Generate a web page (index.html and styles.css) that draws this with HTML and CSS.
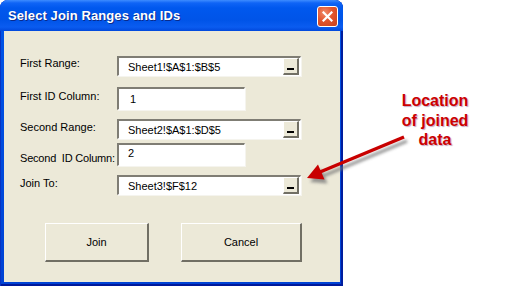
FILE: index.html
```html
<!DOCTYPE html>
<html lang="en">
<head>
    <meta charset="UTF-8">
    <title>Select Join Ranges and IDs</title>
    <link rel="stylesheet" href="styles.css">
</head>
<body>
    <div class="page">
        <div class="window">
            <div class="titlebar">
                <span class="title">Select Join Ranges and IDs</span>
                <span class="close">
                    <svg width="11" height="11" viewBox="0 0 11 11"><path d="M1.5 1.5 L9.5 9.5 M9.5 1.5 L1.5 9.5" stroke="#fff" stroke-width="2.2" stroke-linecap="square"/></svg>
                </span>
            </div>
            <div class="content">
                <div class="row r1">
                    <label class="label">First Range:</label>
                    <div class="field ref"><span>Sheet1!$A$1:$B$5</span><i class="pick"><b></b></i></div>
                </div>
                <div class="row r2">
                    <label class="label">First ID Column:</label>
                    <div class="field idbox"><span>1</span></div>
                </div>
                <div class="row r3">
                    <label class="label">Second Range:</label>
                    <div class="field ref"><span>Sheet2!$A$1:$D$5</span><i class="pick"><b></b></i></div>
                </div>
                <div class="row r4">
                    <label class="label tight">Second&nbsp; ID Column:</label>
                    <div class="field idbox top"><span>2</span></div>
                </div>
                <div class="row r5">
                    <label class="label">Join To:</label>
                    <div class="field ref"><span>Sheet3!$F$12</span><i class="pick"><b></b></i></div>
                </div>
                <div class="buttons">
                    <button class="btn join">Join</button>
                    <button class="btn cancel">Cancel</button>
                </div>
            </div>
        </div>
        <div class="note">Location<br>of joined<br>data</div>
    </div>

    <svg class="arrow" width="507" height="288" viewBox="0 0 507 288">
        <defs>
            <filter id="blur" x="-20%" y="-50%" width="140%" height="200%">
                <feGaussianBlur stdDeviation="1.6"/>
            </filter>
        </defs>
        <g transform="translate(3,4)" filter="url(#blur)" fill="#777" stroke="#777" opacity="0.75">
            <line x1="404" y1="137" x2="320" y2="172" stroke-width="3.5"/>
            <polygon points="307,178 318,164.5 324.5,179.5" stroke="none"/>
        </g>
        <line x1="404" y1="137" x2="320" y2="172" stroke="#c80000" stroke-width="3.5"/>
        <polygon points="307,178 318,164.5 324.5,179.5" fill="#c80000"/>
    </svg>
</body>
</html>
```

FILE: styles.css
```css
*{
    margin: 0px;
    padding: 0px;
    box-sizing: border-box;
}
body{
    background: #fff;
    font-family: "Liberation Sans", Arial, sans-serif;
    font-size: 11px;
    color: #000;
}
.page{
    display: flex;
    width: 507px;
    height: 288px;
}
.window{
    width: 343px;
    height: 286px;
    display: flex;
    flex-direction: column;
    border-radius: 8px 8px 0 0;
    background: linear-gradient(180deg, #0a5ef0 0px, #0053e6 31px, #0042d4 100%);
    box-shadow: inset 1px 0 0 #0833c2, inset -2px 0 0 #001d9e, inset 0 -2px 0 #00189a;
}
.titlebar{
    height: 31px;
    display: flex;
    align-items: center;
    justify-content: space-between;
    padding: 0 5px 1px 8px;
    border-radius: 8px 8px 0 0;
    background: linear-gradient(180deg, #3d8cff 0px, #0f64f6 3px, #0058ee 8px, #0054e8 20px, #0a5cf0 27px, #0048dc 31px);
}
.title{
    color: #fff;
    font-weight: bold;
    font-size: 13px;
    letter-spacing: 0.1px;
    text-shadow: 1px 1px 0 #0a2a8a;
}
.close{
    width: 21px;
    height: 21px;
    margin-top: 2px;
    display: flex;
    align-items: center;
    justify-content: center;
    border: 1px solid #fff;
    border-radius: 3px;
    background: radial-gradient(circle at 35% 30%, #f08b6b 0%, #e2552e 45%, #c8401c 100%);
}
.content{
    flex: 1;
    margin: 0 3px 4px 4px;
    background: #ece9d8;
    padding: 25px 0 0 16px;
}
.row{
    display: flex;
}
.label{
    width: 97px;
    flex: none;
    line-height: 13px;
    white-space: nowrap;
}
.label.tight{
    letter-spacing: -0.2px;
}
.r1 .label{ padding-top: 1px; }
.r2{ margin-top: 11px; }
.r2 .label{ padding-top: 3px; }
.r3{ margin-top: 9px; }
.r3 .label{ padding-top: 2px; }
.r4{ margin-top: 4px; }
.r4 .label{ padding-top: 9px; }
.r5{ margin-top: 9px; }
.r5 .label{ padding-top: 2px; }

.field{
    background: #fff;
    border-top: 2px solid #7f7d74;
    border-left: 2px solid #7f7d74;
    border-bottom: 1px solid #fff;
    border-right: 1px solid #fff;
    box-shadow: 1px 1px 0 #f5f4ee;
    display: flex;
    align-items: center;
    padding-left: 9px;
}
.ref{
    width: 184px;
    height: 20px;
}
.ref span{
    flex: 1;
}
.idbox{
    width: 128px;
    height: 23px;
    padding-left: 11px;
}
.idbox.top{
    align-items: flex-start;
    padding-left: 9px;
    padding-top: 2px;
}
.pick{
    width: 16px;
    height: 17px;
    margin-right: 1px;
    background: #ece9d8;
    border-top: 1px solid #fff;
    border-left: 1px solid #fff;
    border-right: 2px solid #716f64;
    border-bottom: 2px solid #716f64;
    display: flex;
    justify-content: center;
    align-items: flex-end;
    padding-bottom: 3px;
}
.pick b{
    width: 7px;
    height: 2px;
    background: #000;
}
.buttons{
    display: flex;
    gap: 32px;
    margin-top: 28px;
    padding-left: 25px;
}
.btn{
    height: 39px;
    background: #ece9d8;
    font-family: "Liberation Sans", Arial, sans-serif;
    font-size: 11px;
    color: #000;
    border-top: 1px solid #fff;
    border-left: 1px solid #fff;
    border-right: 2px solid #716f64;
    border-bottom: 2px solid #716f64;
}
.join{ width: 104px; }
.cancel{ width: 121px; }

.note{
    width: 164px;
    padding-top: 91px;
    padding-left: 20px;
    text-align: center;
    color: #cc0000;
    font-weight: bold;
    font-size: 16px;
    line-height: 19.5px;
    text-shadow: 1px 1px 1px rgba(120, 60, 120, 0.45);
}
.arrow{
    position: absolute;
    left: 0;
    top: 0;
    pointer-events: none;
}
```
